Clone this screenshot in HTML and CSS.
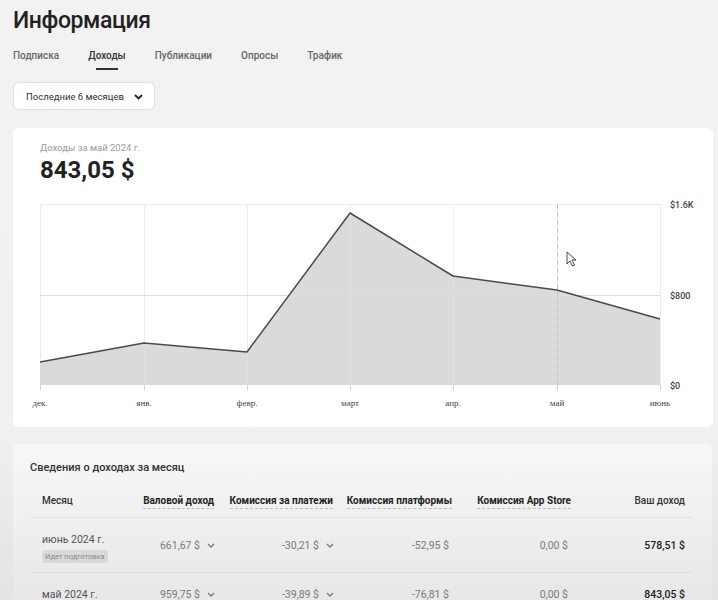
FILE: index.html
```html
<!DOCTYPE html>
<html lang="ru">
<head>
<meta charset="utf-8">
<title>Информация</title>
<link rel="stylesheet" href="styles.css">
</head>
<body>
<div class="page">
  <h1 class="title">Информация</h1>
  <nav class="tabs">
    <span class="tab">Подписка</span>
    <span class="tab active">Доходы</span>
    <span class="tab">Публикации</span>
    <span class="tab">Опросы</span>
    <span class="tab">Трафик</span>
  </nav>
  <div class="select">
    <span>Последние 6 месяцев</span>
    <svg class="select-chev" width="9" height="6" viewBox="0 0 9 6"><path d="M1 1 L4.5 4.5 L8 1" fill="none" stroke="#222" stroke-width="1.8"/></svg>
  </div>

  <section class="card chart-card">
    <div class="sub">Доходы за май 2024 г.</div>
    <div class="amount">843,05 $</div>
    <svg class="chart" width="670" height="220" viewBox="0 0 670 220">
      <g stroke="#ececec" stroke-width="1">
        <line x1="0" y1="5.5" x2="620" y2="5.5"/>
        <line x1="0" y1="96.5" x2="620" y2="96.5"/>
        <line x1="0.5" y1="5" x2="0.5" y2="186"/>
        <line x1="104.5" y1="5" x2="104.5" y2="186"/>
        <line x1="207.5" y1="5" x2="207.5" y2="186"/>
        <line x1="310.5" y1="5" x2="310.5" y2="186"/>
        <line x1="413.5" y1="5" x2="413.5" y2="186"/>
        <line x1="620.5" y1="5" x2="620.5" y2="186"/>
      </g>
      <path d="M0 163 L104 144 L207 153 L310 14 L413 77 L517 91 L620 120 L620 186 L0 186 Z" fill="#dadada"/>
      <g stroke="#e0e0e0" stroke-width="1">
        <line x1="104.5" y1="144" x2="104.5" y2="186"/>
        <line x1="207.5" y1="153" x2="207.5" y2="186"/>
        <line x1="310.5" y1="14" x2="310.5" y2="186"/>
        <line x1="413.5" y1="77" x2="413.5" y2="186"/>
        <line x1="0" y1="96.5" x2="620" y2="96.5" stroke="#dedede"/>
      </g>
      <line x1="517.5" y1="5" x2="517.5" y2="186" stroke="#c4c4c4" stroke-width="1" stroke-dasharray="5 3"/>
      <path d="M0 163 L104 144 L207 153 L310 14 L413 77 L517 91 L620 120" fill="none" stroke="#4a4a4a" stroke-width="1.5" stroke-linejoin="round"/>
      <g stroke="#cfcfcf" stroke-width="1">
        <line x1="0.5" y1="186" x2="0.5" y2="191"/>
        <line x1="104.5" y1="186" x2="104.5" y2="191"/>
        <line x1="207.5" y1="186" x2="207.5" y2="191"/>
        <line x1="310.5" y1="186" x2="310.5" y2="191"/>
        <line x1="413.5" y1="186" x2="413.5" y2="191"/>
        <line x1="517.5" y1="186" x2="517.5" y2="191"/>
        <line x1="620.5" y1="186" x2="620.5" y2="191"/>
      </g>
      <g class="ylab">
        <text x="630" y="8.5">$1.6K</text>
        <text x="630" y="99.5">$800</text>
        <text x="630" y="189.5">$0</text>
      </g>
      <g class="xlab" text-anchor="middle">
        <text x="0" y="207">дек.</text>
        <text x="104" y="207">янв.</text>
        <text x="207" y="207">февр.</text>
        <text x="310" y="207">март</text>
        <text x="413" y="207">апр.</text>
        <text x="517" y="207">май</text>
        <text x="620" y="207">июнь</text>
      </g>
      <path d="M527 53 L527 65 L530 62 L532.5 67 L534.5 66 L532 61 L536 61 Z" fill="#fff" stroke="#333" stroke-width="0.9" stroke-linejoin="round"/>
    </svg>
  </section>

  <section class="card table-card">
    <h2 class="table-title">Сведения о доходах за месяц</h2>
    <div class="table">
      <div class="row head">
        <span class="plain">Месяц</span>
        <span class="num"><span class="dotted">Валовой доход</span></span>
        <span class="num"><span class="dotted">Комиссия за платежи</span></span>
        <span class="num"><span class="dotted">Комиссия платформы</span></span>
        <span class="num"><span class="dotted">Комиссия App Store</span></span>
        <span class="num plain">Ваш доход</span>
      </div>
      <div class="row body-row first">
        <div class="month">
          <span>июнь 2024 г.</span>
          <span class="badge">Идет подготовка</span>
        </div>
        <span class="num val">661,67 $<svg class="chev" width="8" height="5" viewBox="0 0 8 5"><path d="M1 1 L4 4 L7 1" fill="none" stroke="#777" stroke-width="1.3"/></svg></span>
        <span class="num val">-30,21 $<svg class="chev" width="8" height="5" viewBox="0 0 8 5"><path d="M1 1 L4 4 L7 1" fill="none" stroke="#777" stroke-width="1.3"/></svg></span>
        <span class="num val pad">-52,95 $</span>
        <span class="num val pad">0,00 $</span>
        <span class="num total">578,51 $</span>
      </div>
      <div class="row body-row">
        <div class="month"><span>май 2024 г.</span></div>
        <span class="num val">959,75 $<svg class="chev" width="8" height="5" viewBox="0 0 8 5"><path d="M1 1 L4 4 L7 1" fill="none" stroke="#777" stroke-width="1.3"/></svg></span>
        <span class="num val">-39,89 $<svg class="chev" width="8" height="5" viewBox="0 0 8 5"><path d="M1 1 L4 4 L7 1" fill="none" stroke="#777" stroke-width="1.3"/></svg></span>
        <span class="num val pad">-76,81 $</span>
        <span class="num val pad">0,00 $</span>
        <span class="num total">843,05 $</span>
      </div>
    </div>
  </section>
</div>
</body>
</html>
```

FILE: styles.css
```css
* { box-sizing: border-box; }

html, body {
  margin: 0;
  height: 100%;
}

body {
  background: linear-gradient(#f2f2f2 0, #f1f1f1 420px, #e3e3e3 600px);
  font-family: Roboto, "Noto Sans", sans-serif;
  color: #222;
  overflow: hidden;
}

.page {
  padding: 6px 5px 0 13px;
}

.title {
  margin: 0;
  font-size: 23px;
  line-height: 30px;
  font-weight: 500;
  letter-spacing: -0.4px;
  color: #222;
}

.tabs {
  display: flex;
  gap: 29px;
  margin-top: 13px;
  height: 33px;
}

.tab {
  display: flex;
  flex-direction: column;
  align-items: center;
  font-size: 10px;
  line-height: 14px;
  font-weight: 500;
  color: #666;
}

.tab.active {
  color: #333;
}

.tab.active::after {
  content: "";
  display: block;
  width: 22px;
  height: 2px;
  background: #333;
  margin-top: 5px;
}

.select {
  width: 142px;
  height: 28px;
  background: #fff;
  border: 1px solid #e1e1e1;
  border-radius: 6px;
  display: flex;
  align-items: center;
  justify-content: space-between;
  padding: 0 11px 0 12px;
  font-size: 9.5px;
  color: #333;
  white-space: nowrap;
}

.select-chev {
  margin-top: 1px;
}

.card {
  background: #fff;
  border-radius: 6px;
  width: 700px;
}

.chart-card {
  margin-top: 18px;
  padding: 14px 0 8px 27px;
  height: 299px;
}

.sub {
  font-size: 9.5px;
  line-height: 12px;
  color: #9a9a9a;
}

.amount {
  margin-top: 2px;
  font-size: 24px;
  line-height: 28px;
  font-weight: 700;
  color: #222;
}

.chart {
  display: block;
  margin-top: 15px;
  overflow: visible;
}

.ylab text {
  font-family: Roboto, sans-serif;
  font-size: 9px;
  font-weight: 500;
  fill: #444;
}

.xlab text {
  font-family: "Liberation Serif", serif;
  font-size: 9px;
  fill: #444;
}

.table-card {
  margin-top: 17px;
  width: 699px;
  height: 200px;
  background: linear-gradient(#f7f7f7, #e8e8e8 150px);
  padding: 18px 20px 0 17px;
}

.table-title {
  margin: 0;
  font-size: 11px;
  line-height: 12px;
  font-weight: 500;
  color: #333;
}

.table {
  margin-top: 10px;
}

.row {
  display: grid;
  grid-template-columns: 53px 119px 119px 119px 119px 114px;
  align-items: center;
  padding: 0 7px 0 12px;
  font-size: 10.5px;
}

.row.head {
  height: 34px;
  font-size: 10px;
  font-weight: 700;
  color: #222;
  border-bottom: 1px solid #e2e2e2;
}

.head .plain {
  font-weight: 500;
  color: #333;
}

.num {
  text-align: right;
  white-space: nowrap;
}

.dotted {
  border-bottom: 1px dashed #bdbdbd;
  padding-bottom: 2px;
}

.body-row {
  height: 55px;
  border-bottom: 1px solid #dedede;
}

.body-row + .body-row {
  height: 44px;
}

.month {
  display: flex;
  flex-direction: column;
  align-items: flex-start;
  gap: 4px;
  color: #555;
  white-space: nowrap;
}

.month > span:first-child {
  font-size: 10.5px;
  line-height: 13px;
}

.badge {
  background: #d9d9d9;
  border-radius: 3px;
  font-size: 7.5px;
  line-height: 13px;
  padding: 0 3px;
  color: #8a8a8a;
}

.first .month {
  margin-top: 6px;
}

.val {
  color: #7a7a7a;
  display: flex;
  justify-content: flex-end;
  align-items: center;
}

.chev {
  margin-left: 7px;
  margin-right: -1px;
}

.val.pad {
  padding-right: 3px;
}

.total {
  color: #222;
  font-weight: 500;
}
```
